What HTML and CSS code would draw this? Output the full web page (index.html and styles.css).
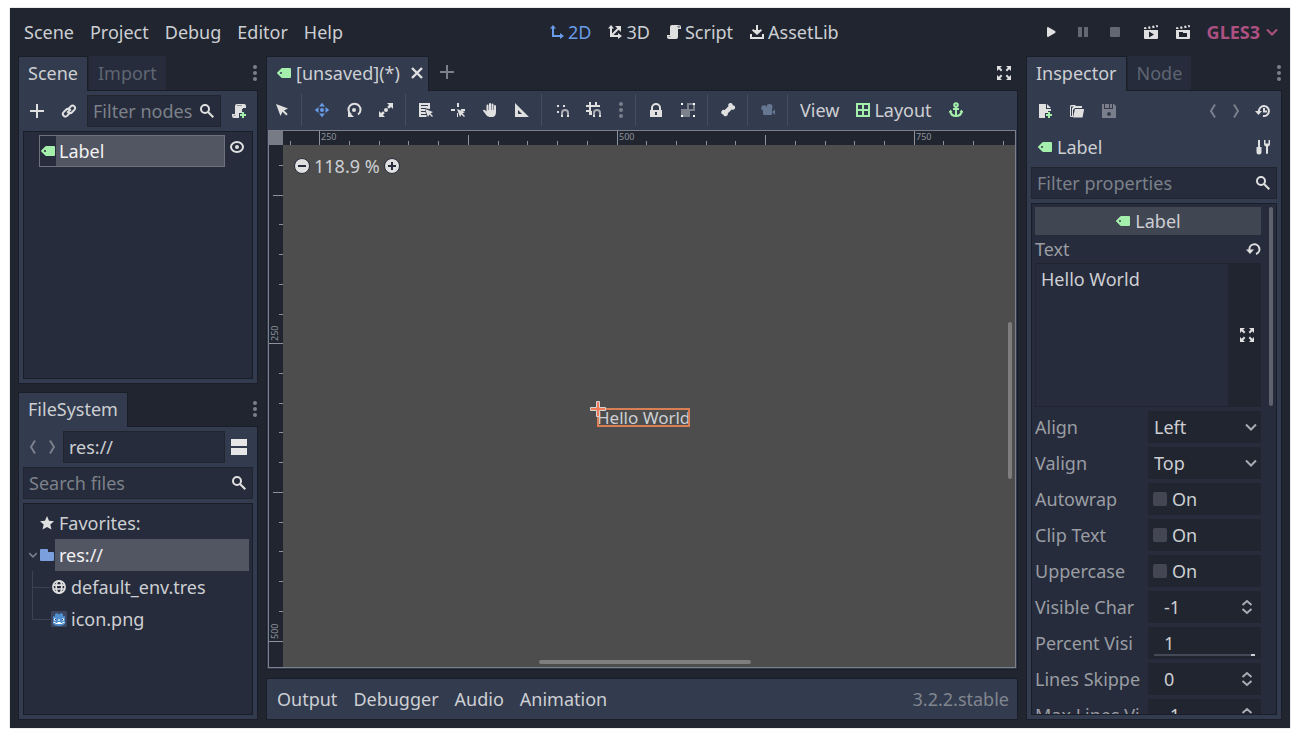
FILE: index.html
```
<!DOCTYPE html>
<html lang="en">
<head>
  <meta charset="UTF-8">
  <meta name="viewport" content="width=device-width, initial-scale=1.0">
  <title>Editor</title>
  <link rel="stylesheet" href="styles.css">
</head>
<body>

  <!-- Icon set -->
  <svg class="sprite" aria-hidden="true">
    <symbol id="i-label" viewBox="0 0 16 16"><path fill="#a5efac" fill-rule="evenodd" d="M6 3a1 1 0 0 0-.8.4l-4 4a1 1 0 0 0 0 1.2l4 4a1 1 0 0 0 .8.4h8a1 1 0 0 0 1-1V4a1 1 0 0 0-1-1zM5 7a1 1 0 1 1 0 2 1 1 0 0 1 0-2z"/></symbol>
    <symbol id="i-add" viewBox="0 0 16 16"><path d="M7 1v6H1v2h6v6h2V9h6V7H9V1z"/></symbol>
    <symbol id="i-link" viewBox="0 0 16 16"><g fill="none" stroke="currentColor" stroke-width="2"><path d="M8.500 10 6.300 12.600a2.500 2.500 0 0 1-3.700-3.500L5 6.700a2.500 2.500 0 0 1 3.500 0"/><path d="m7.500 6 2.300-2.600a2.500 2.500 0 0 1 3.600 3.500L11 9.300a2.500 2.500 0 0 1-3.500 0M6.200 9.800l3.600-3.600"/></g></symbol>
    <symbol id="i-search" viewBox="0 0 16 16"><g fill="none" stroke="currentColor" stroke-width="2"><circle cx="6" cy="6" r="4"/><path d="m9 9 5.300 5.300"/></g></symbol>
    <symbol id="i-script" viewBox="0 0 16 16"><path d="M6 1a2 2 0 0 0-2 2v8H1v2a2 2 0 0 0 2 2h7a2 2 0 0 0 2-2V5h3V3a2 2 0 0 0-2-2z"/><path fill="#8d9097" d="M11 2h1a1 1 0 0 1 2 1v1h-2.200V3H11zM2 12h2.500v1H3z"/></symbol>
    <symbol id="i-script-add" viewBox="0 0 16 16"><path d="M6 1a2 2 0 0 0-2 2v8H1v2a2 2 0 0 0 2 2h5v-5h3V6h1V5h3V3a2 2 0 0 0-2-2z"/><path fill="#8d9097" d="M6 2h5v1H6zM2 12h2.500v1H3z"/><path fill="#a5efac" d="M11 9v2H9v2h2v2h2v-2h2v-2h-2V9z"/></symbol>
    <symbol id="i-eye" viewBox="0 0 16 16"><ellipse cx="8" cy="8" rx="6" ry="5" fill="none" stroke="currentColor" stroke-width="2"/><circle cx="8" cy="8" r="2"/></symbol>
    <symbol id="i-dots" viewBox="0 0 16 16"><circle cx="8" cy="2" r="2"/><circle cx="8" cy="8" r="2"/><circle cx="8" cy="14" r="2"/></symbol>
    <symbol id="i-back" viewBox="0 0 16 16"><path fill="none" stroke="currentColor" stroke-width="2" d="M12 1.500 8 8l4 6.500"/></symbol>
    <symbol id="i-forward" viewBox="0 0 16 16"><path fill="none" stroke="currentColor" stroke-width="2" d="m7 1.500 4 6.500-4 6.500"/></symbol>
    <symbol id="i-split" viewBox="0 0 16 16"><path d="M0 0h16v7H0zM0 9h16v7H0z"/></symbol>
    <symbol id="i-star" viewBox="0 0 16 16"><path d="m8 1 2 4.700 5 .5-3.700 3.300 1.200 5L8 12l-4.500 2.500 1.200-5L1 6.200l5-.5z"/></symbol>
    <symbol id="i-folder" viewBox="0 0 16 16"><path fill="#7a9fdc" d="M2 2a1 1 0 0 0-1 1v10a1 1 0 0 0 1 1h12a1 1 0 0 0 1-1V6a1 1 0 0 0-1-1H9V3a1 1 0 0 0-1-1z"/></symbol>
    <symbol id="i-globe" viewBox="0 0 16 16"><g fill="none" stroke="currentColor" stroke-width="1.700"><circle cx="8" cy="8" r="6.100"/><ellipse cx="8" cy="8" rx="2.800" ry="6"/><path d="M2 6.200h12M2 10h12"/></g></symbol>
    <symbol id="i-godot" viewBox="0 0 16 16"><rect width="16" height="16" rx="1" fill="#3c4660"/><path fill="#4f8fd0" d="M2 5l2 .5V3l2-1 1 1h2l1-1 2 1v2.500l2-.5v8q-2 2-6 2t-6-2z"/><path fill="#fff" d="M3 7.500h2v2H3zM11 7.500h2v2h-2zM7.400 8h1.200v2H7.400zM2.500 11h2v1h2v-1h3v1h2v-1h2v1h-2v1h-7v-1h-2z"/><path fill="#2c3448" d="M4 8h1v1H4zM11 8h1v1h-1z"/></symbol>
    <symbol id="i-down" viewBox="0 0 16 16"><path fill="none" stroke="currentColor" stroke-width="2" d="m3 5.500 5 5 5-5"/></symbol>
    <symbol id="i-updown" viewBox="0 0 16 16"><path fill="none" stroke="currentColor" stroke-width="2" d="m3.500 6 4.500-4 4.500 4M3.500 10l4.500 4 4.500-4"/></symbol>
    <symbol id="i-2d" viewBox="0 0 16 16"><path d="M4 1 1 4.500h2V13h8v2l4-3-4-3v2H5V4.500h2z"/></symbol>
    <symbol id="i-3d" viewBox="0 0 16 16"><path d="M4 1 1 4.500h2V13h8v2l4-3-4-3v2H6.400l5.300-5.300L14 8V2H8l2.300 2.300L5 9.600V4.500h2z"/></symbol>
    <symbol id="i-asset" viewBox="0 0 16 16"><path d="M7 1h2v5h1.500L12 5l1 1.500-5 4.500-5-4.500L4 5l1.500 1H7zM1 10h2v3h10v-3h2v5H1z"/></symbol>
    <symbol id="i-play" viewBox="0 0 16 16"><path d="M4 4.200q0-1.700 1.500-1L12 7q1.400 1 0 2l-6.500 3.800q-1.500.7-1.500-1z"/></symbol>
    <symbol id="i-pause" viewBox="0 0 16 16"><path d="M3 3h4v10H3zM9 3h4v10H9z"/></symbol>
    <symbol id="i-stop" viewBox="0 0 16 16"><rect x="3" y="3" width="10" height="10" rx="1"/></symbol>
    <symbol id="i-clap-play" viewBox="0 0 16 16"><path fill-rule="evenodd" d="M1 6h14v8a1 1 0 0 1-1 1H2a1 1 0 0 1-1-1zM6 7.500v6l5-3z"/><path d="m1 3.500 2-.4.700 1.900H1zM5 2.700l2-.4.700 2.200-2 .4zM9 2l2-.4.700 2.200-2 .4zM12.800 1.300l1.800-.3.400 2-1.500.4z"/></symbol>
    <symbol id="i-clap-folder" viewBox="0 0 16 16"><path fill-rule="evenodd" d="M1 6h14v8a1 1 0 0 1-1 1H2a1 1 0 0 1-1-1zM4 8v5h8V9H8V8z"/><path d="m1 3.500 2-.4.700 1.900H1zM5 2.700l2-.4.700 2.200-2 .4zM9 2l2-.4.700 2.200-2 .4zM12.800 1.300l1.800-.3.400 2-1.500.4z"/></symbol>
    <symbol id="i-close" viewBox="0 0 16 16"><path fill="none" stroke="currentColor" stroke-width="2.400" d="m3 3 10 10M13 3 3 13"/></symbol>
    <symbol id="i-expand" viewBox="0 0 16 16"><path d="M1 1v5l1.800-1.800L5 6.400 6.400 5 4.200 2.800 6 1zM15 1v5l-1.800-1.800L11 6.400 9.600 5l2.200-2.200L10 1zM1 15v-5l1.800 1.800L5 9.600 6.400 11l-2.200 2.200L6 15zM15 15v-5l-1.800 1.800L11 9.600 9.600 11l2.200 2.200L10 15z"/></symbol>
    <symbol id="i-select" viewBox="0 0 16 16"><path d="m2 2 4.500 12 2-4.300 3.800 3.800 1.400-1.400L10 8.400 14 6.500z"/></symbol>
    <symbol id="i-move" viewBox="0 0 16 16"><path d="m8 .8 3 3.700H5zM8 15.200l3-3.700H5zM.8 8l3.700-3v6zM15.200 8l-3.700-3v6z"/><circle cx="8" cy="8" r="2"/></symbol>
    <symbol id="i-rotate" viewBox="0 0 16 16"><path fill="none" stroke="currentColor" stroke-width="2" d="M5 12.500A6 6 0 1 1 12 12.500"/><path d="M2 9v6h6z"/><circle cx="8" cy="8" r="2"/></symbol>
    <symbol id="i-scale" viewBox="0 0 16 16"><path d="M9 1h6v6l-2-2-2 1.800L9.200 5 11 3zM1 9v6h6l-2-2 1.800-2L5 9.200 3 11z"/><circle cx="8" cy="8" r="2"/></symbol>
    <symbol id="i-listsel" viewBox="0 0 16 16"><path fill-rule="evenodd" d="M1 1h11v6L8 6.500V6H3v1h4v2H3v1h4.500l.5 2H3v1h5.500v2H1zM3 3v1h7V3z"/><path d="m7 7 3 8 1.500-2.500L14 15l1-1-2.500-2.500L15 10z"/></symbol>
    <symbol id="i-pivot" viewBox="0 0 16 16"><path d="M7 1h2v4H7zM1 7h4v2H1zM11 7h4v2h-4zM7 11h1v4H7zM7 7l3 8 1.500-2.500L14 15l1-1-2.500-2.500L15 10z"/></symbol>
    <symbol id="i-hand" viewBox="0 0 16 16"><path d="M4.500 3.500a1 1 0 0 1 2 0V8H7V2a1 1 0 0 1 2 0v6h.5V2.500a1 1 0 0 1 2 0V8h.5V4a1 1 0 0 1 2 0v6q0 5-4 5H7.500q-2.500 0-4-3L.8 8.500Q2 7 3.500 8.500l1 1z"/></symbol>
    <symbol id="i-ruler" viewBox="0 0 16 16"><path fill-rule="evenodd" d="M1 1v14h14zm3 7 4 4H4z"/></symbol>
    <symbol id="i-snap" viewBox="0 0 16 16"><path d="M3 3h2v2H3zM9 3h2v2H9zM3 9h2v2H3z"/><path fill="none" stroke="#a9acb2" stroke-width="2" d="M8 13v-2a3 3 0 0 1 6 0v2"/><path d="M7 13h2v2H7zM13 13h2v2h-2z"/></symbol>
    <symbol id="i-grid" viewBox="0 0 16 16"><path d="M3 0h2v3h4V0h2v3h3v2H5v4h1v4H3v-3H0V8h3V5H0V3h3z"/><path fill="none" stroke="#a9acb2" stroke-width="2" d="M8 13v-2a3 3 0 0 1 6 0v2"/><path d="M7 13h2v2H7zM13 13h2v2h-2z"/></symbol>
    <symbol id="i-lock" viewBox="0 0 16 16"><path fill-rule="evenodd" d="M2 8h1V6a5 5 0 0 1 10 0v2h1v7H2zm3 0h6V6a3 3 0 0 0-6 0zm2 2v3h2v-3z"/></symbol>
    <symbol id="i-group" viewBox="0 0 16 16"><path fill="#7d828d" fill-rule="evenodd" d="M7 1h8v8h-5v6H1V7h6zm2 2v4h4V3z"/><path fill="#fff" d="M1 1h2v2H1zM13 1h2v2h-2zM1 13h2v2H1zM13 13h2v2h-2z"/></symbol>
    <symbol id="i-bone" viewBox="0 0 16 16"><path d="M10.500 1a2.200 2.200 0 0 0-2 3.300L4.700 8.100a2.300 2.300 0 1 0-1.400 4.300A2.300 2.300 0 1 0 7.900 11.300l3.800-3.800a2.300 2.300 0 1 0 1.100-4.300A2.300 2.300 0 0 0 10.500 1z"/></symbol>
    <symbol id="i-camera" viewBox="0 0 16 16"><g fill="#667791"><circle cx="4" cy="6" r="2.700"/><circle cx="9.500" cy="5" r="3"/><rect x="3" y="6" width="9" height="7" rx="1"/><path d="m12 10 3-2.500v5.500z"/></g></symbol>
    <symbol id="i-layout" viewBox="0 0 16 16"><path fill="#a5efac" fill-rule="evenodd" d="M1 1h14v14H1zm2 2v4h4V3zm6 0v4h4V3zM3 9v4h4V9zm6 0v4h4V9z"/></symbol>
    <symbol id="i-anchor" viewBox="0 0 16 16"><g fill="none" stroke="#a5efac" stroke-width="2"><circle cx="8" cy="3" r="1.800"/><path d="M8 5v9M5 7h6M2.200 9Q3 14 8 14t5.800-5"/></g><path fill="#a5efac" d="m.5 10.500 2-3 2 2.500zM15.500 10.500l-2-3-2 2.500z"/></symbol>
    <symbol id="i-minus-c" viewBox="0 0 16 16"><circle cx="8" cy="8" r="7.500" fill="#e0e0e0" stroke="#262c3b"/><path fill="#262c3b" d="M4 7h8v2H4z"/></symbol>
    <symbol id="i-plus-c" viewBox="0 0 16 16"><circle cx="8" cy="8" r="7.500" fill="#e0e0e0" stroke="#262c3b"/><path fill="#262c3b" d="M4 7h3V4h2v3h3v2H9v3H7V9H4z"/></symbol>
    <symbol id="i-new" viewBox="0 0 16 16"><path d="M2 1h7v5h5v2h-3v2H8v5H2zM10 1l4 4h-4z"/><path fill="#a5efac" d="M11 9v2H9v2h2v2h2v-2h2v-2h-2V9z"/></symbol>
    <symbol id="i-open" viewBox="0 0 16 16"><path d="M2 2h4l1 1h6v2H6L4 7v7H2a1 1 0 0 1-1-1V3zm0 1.500V13h1V5l2-1.500z"/><path d="M6 6h9v1l-1.500 7.500H4z"/></symbol>
    <symbol id="i-save" viewBox="0 0 16 16"><path fill-rule="evenodd" d="M1 1h2v5h9V1h1l2 2v12H1zm7 8a2 2 0 1 0 0 4 2 2 0 0 0 0-4zM6 1h2v4H4V1zM9 1h2v4H9z"/></symbol>
    <symbol id="i-history" viewBox="0 0 16 16"><path fill="none" stroke="currentColor" stroke-width="2" d="M4 9a5 5 0 1 1 4 4M9 5v3.500h3"/><path d="M0 8h7l-3.500 4z"/></symbol>
    <symbol id="i-tools" viewBox="0 0 16 16"><path d="M3 1h2v7h1.500v5a2.500 2.500 0 0 1-5 0V8H3zM9 1v4q0 2 2 2.500V14a1 1 0 0 0 2 0V7.500q2-.5 2-2.500V1h-1.500v3.500h-3V1z"/></symbol>
    <symbol id="i-reload" viewBox="0 0 16 16"><path fill="none" stroke="currentColor" stroke-width="2" d="M4.500 9a5 5 0 1 1 6.500 4"/><path d="M1 8.500h8L5 13z"/></symbol>
  </svg>

  <div class="window">

    <!-- Menu bar -->
    <header class="menubar">
      <nav class="menus">
        <button>Scene</button>
        <button>Project</button>
        <button>Debug</button>
        <button>Editor</button>
        <button>Help</button>
      </nav>
      <nav class="modes">
        <button class="active"><svg class="icon"><use href="#i-2d"/></svg>2D</button>
        <button><svg class="icon"><use href="#i-3d"/></svg>3D</button>
        <button><svg class="icon"><use href="#i-script"/></svg>Script</button>
        <button><svg class="icon"><use href="#i-asset"/></svg>AssetLib</button>
      </nav>
      <div class="run">
        <div class="playback">
          <button class="tool" aria-label="Play"><svg class="icon"><use href="#i-play"/></svg></button>
          <button class="tool dim" aria-label="Pause"><svg class="icon"><use href="#i-pause"/></svg></button>
          <button class="tool dim" aria-label="Stop"><svg class="icon"><use href="#i-stop"/></svg></button>
        </div>
        <button class="tool" aria-label="Play scene"><svg class="icon"><use href="#i-clap-play"/></svg></button>
        <button class="tool" aria-label="Play custom scene"><svg class="icon"><use href="#i-clap-folder"/></svg></button>
        <button class="driver">GLES3<svg class="icon"><use href="#i-down"/></svg></button>
      </div>
    </header>

    <main class="workspace">

      <!-- Left docks -->
      <div class="column left">
        <section class="dock">
          <div class="tabs">
            <button class="tab current">Scene</button>
            <button class="tab">Import</button>
            <button class="more" aria-label="Dock options"><svg class="icon"><use href="#i-dots"/></svg></button>
          </div>
          <div class="panel">
            <div class="row">
              <button class="tool" aria-label="Add node"><svg class="icon"><use href="#i-add"/></svg></button>
              <button class="tool" aria-label="Instance scene"><svg class="icon"><use href="#i-link"/></svg></button>
              <div class="field grow">
                <input type="text" placeholder="Filter nodes" aria-label="Filter nodes">
                <svg class="icon"><use href="#i-search"/></svg>
              </div>
              <button class="tool" aria-label="Attach script"><svg class="icon"><use href="#i-script-add"/></svg></button>
            </div>
            <ul class="tree scene-tree">
              <li>
                <span class="node"><svg class="icon"><use href="#i-label"/></svg><span class="name">Label</span></span>
                <button class="visibility" aria-label="Toggle visibility"><svg class="icon"><use href="#i-eye"/></svg></button>
              </li>
            </ul>
          </div>
        </section>

        <section class="dock">
          <div class="tabs">
            <button class="tab current">FileSystem</button>
            <button class="more" aria-label="Dock options"><svg class="icon"><use href="#i-dots"/></svg></button>
          </div>
          <div class="panel">
            <div class="row">
              <button class="arrow" aria-label="Back"><svg class="icon"><use href="#i-back"/></svg></button>
              <button class="arrow" aria-label="Forward"><svg class="icon"><use href="#i-forward"/></svg></button>
              <div class="field grow"><input type="text" value="res://" aria-label="Path"></div>
              <button class="split" aria-label="Split mode"><svg class="icon"><use href="#i-split"/></svg></button>
            </div>
            <div class="field">
              <input type="text" placeholder="Search files" aria-label="Search files">
              <svg class="icon"><use href="#i-search"/></svg>
            </div>
            <ul class="tree files">
              <li><svg class="icon"><use href="#i-star"/></svg><span class="name">Favorites:</span></li>
              <li class="selected"><svg class="icon fold"><use href="#i-down"/></svg><svg class="icon"><use href="#i-folder"/></svg><span class="name">res://</span></li>
              <li class="child"><svg class="icon"><use href="#i-globe"/></svg><span class="name">default_env.tres</span></li>
              <li class="child end"><svg class="icon"><use href="#i-godot"/></svg><span class="name">icon.png</span></li>
            </ul>
          </div>
        </section>
      </div>

      <!-- 2D editor -->
      <div class="column center">
        <section class="dock">
          <div class="tabs">
            <button class="tab current scene-tab"><svg class="icon"><use href="#i-label"/></svg>[unsaved](*)<svg class="icon x"><use href="#i-close"/></svg></button>
            <button class="tool add" aria-label="New scene"><svg class="icon"><use href="#i-add"/></svg></button>
            <button class="tool more" aria-label="Distraction free mode"><svg class="icon"><use href="#i-expand"/></svg></button>
          </div>
          <div class="panel canvas-panel">
            <div class="toolbar">
              <button class="tool" aria-label="Select"><svg class="icon"><use href="#i-select"/></svg></button>
              <span class="sep"></span>
              <button class="tool active" aria-label="Move"><svg class="icon"><use href="#i-move"/></svg></button>
              <button class="tool" aria-label="Rotate"><svg class="icon"><use href="#i-rotate"/></svg></button>
              <button class="tool" aria-label="Scale"><svg class="icon"><use href="#i-scale"/></svg></button>
              <span class="sep"></span>
              <button class="tool" aria-label="List select"><svg class="icon"><use href="#i-listsel"/></svg></button>
              <button class="tool" aria-label="Pivot"><svg class="icon"><use href="#i-pivot"/></svg></button>
              <button class="tool" aria-label="Pan"><svg class="icon"><use href="#i-hand"/></svg></button>
              <button class="tool" aria-label="Ruler"><svg class="icon"><use href="#i-ruler"/></svg></button>
              <span class="sep"></span>
              <button class="tool" aria-label="Smart snap"><svg class="icon"><use href="#i-snap"/></svg></button>
              <button class="tool" aria-label="Grid snap"><svg class="icon"><use href="#i-grid"/></svg></button>
              <button class="tool narrow dim" aria-label="Snap options"><svg class="icon"><use href="#i-dots"/></svg></button>
              <span class="sep"></span>
              <button class="tool" aria-label="Lock"><svg class="icon"><use href="#i-lock"/></svg></button>
              <button class="tool" aria-label="Group"><svg class="icon"><use href="#i-group"/></svg></button>
              <span class="sep"></span>
              <button class="tool" aria-label="Skeleton"><svg class="icon"><use href="#i-bone"/></svg></button>
              <span class="sep"></span>
              <button class="tool" aria-label="Camera override"><svg class="icon"><use href="#i-camera"/></svg></button>
              <span class="sep"></span>
              <button class="text-tool">View</button>
              <button class="text-tool"><svg class="icon"><use href="#i-layout"/></svg>Layout</button>
              <button class="tool" aria-label="Anchors"><svg class="icon"><use href="#i-anchor"/></svg></button>
            </div>
            <div class="viewport">
              <div class="corner"></div>
              <svg class="ruler" id="ruler-x"></svg>
              <svg class="ruler" id="ruler-y"></svg>
              <div class="canvas">
                <div class="zoom">
                  <button aria-label="Zoom out"><svg class="icon"><use href="#i-minus-c"/></svg></button>
                  <span>118.9 %</span>
                  <button aria-label="Zoom in"><svg class="icon"><use href="#i-plus-c"/></svg></button>
                </div>
                <div class="item">Hello World
                  <svg class="pivot" viewBox="0 0 16 16"><path d="M6.500.5h3v6h6v3h-6v6h-3v-6h-6v-3h6z"/></svg>
                </div>
                <span class="scroll-y"></span>
                <span class="scroll-x"></span>
              </div>
            </div>
          </div>
        </section>
        <footer class="bottom">
          <button>Output</button>
          <button>Debugger</button>
          <button>Audio</button>
          <button>Animation</button>
          <span class="version">3.2.2.stable</span>
        </footer>
      </div>

      <!-- Inspector -->
      <div class="column right">
        <section class="dock">
          <div class="tabs">
            <button class="tab current">Inspector</button>
            <button class="tab">Node</button>
            <button class="more" aria-label="Dock options"><svg class="icon"><use href="#i-dots"/></svg></button>
          </div>
          <div class="panel">
            <div class="row">
              <button class="tool" aria-label="New resource"><svg class="icon"><use href="#i-new"/></svg></button>
              <button class="tool" aria-label="Open resource"><svg class="icon"><use href="#i-open"/></svg></button>
              <button class="tool dim" aria-label="Save resource"><svg class="icon"><use href="#i-save"/></svg></button>
              <span class="grow"></span>
              <button class="arrow wide" aria-label="Previous"><svg class="icon"><use href="#i-back"/></svg></button>
              <button class="arrow wide" aria-label="Next"><svg class="icon"><use href="#i-forward"/></svg></button>
              <button class="tool" aria-label="History"><svg class="icon"><use href="#i-history"/></svg></button>
            </div>
            <div class="row object">
              <svg class="icon"><use href="#i-label"/></svg>
              <span class="grow">Label</span>
              <button class="tool" aria-label="Object tools"><svg class="icon"><use href="#i-tools"/></svg></button>
            </div>
            <div class="field">
              <input type="text" placeholder="Filter properties" aria-label="Filter properties">
              <svg class="icon"><use href="#i-search"/></svg>
            </div>
            <div class="tree properties">
              <div class="list">
                <h2 class="category"><svg class="icon"><use href="#i-label"/></svg>Label</h2>
                <div class="text-head">
                  <label for="text">Text</label>
                  <button aria-label="Revert"><svg class="icon"><use href="#i-reload"/></svg></button>
                </div>
                <div class="text-edit">
                  <textarea id="text">Hello World</textarea>
                  <button aria-label="Expand"><svg class="icon"><use href="#i-expand"/></svg></button>
                </div>
                <div class="prop">
                  <label for="align">Align</label>
                  <div class="value"><select id="align"><option>Left</option><option>Center</option><option>Right</option></select><svg class="icon"><use href="#i-down"/></svg></div>
                </div>
                <div class="prop">
                  <label for="valign">Valign</label>
                  <div class="value"><select id="valign"><option>Top</option><option>Center</option><option>Bottom</option></select><svg class="icon"><use href="#i-down"/></svg></div>
                </div>
                <div class="prop">
                  <label for="autowrap">Autowrap</label>
                  <label class="value check"><input type="checkbox" id="autowrap">On</label>
                </div>
                <div class="prop">
                  <label for="clip">Clip Text</label>
                  <label class="value check"><input type="checkbox" id="clip">On</label>
                </div>
                <div class="prop">
                  <label for="upper">Uppercase</label>
                  <label class="value check"><input type="checkbox" id="upper">On</label>
                </div>
                <div class="prop">
                  <label for="visible">Visible Char</label>
                  <div class="value"><input type="text" id="visible" value="-1"><svg class="icon"><use href="#i-updown"/></svg></div>
                </div>
                <div class="prop">
                  <label for="percent">Percent Visi</label>
                  <div class="value"><input type="text" id="percent" value="1"><span class="slide"></span></div>
                </div>
                <div class="prop">
                  <label for="skipped">Lines Skippe</label>
                  <div class="value"><input type="text" id="skipped" value="0"><svg class="icon"><use href="#i-updown"/></svg></div>
                </div>
                <div class="prop">
                  <label for="maxlines">Max Lines Vi</label>
                  <div class="value"><input type="text" id="maxlines" value="-1"><svg class="icon"><use href="#i-updown"/></svg></div>
                </div>
              </div>
              <span class="scroll"></span>
            </div>
          </div>
        </section>
      </div>

    </main>
  </div>

  <script>
    const zoom = 1.189;
    const step = 25;
    const size = 14;

    // canvas origin, measured from the start of each ruler
    drawRuler("ruler-x", -261, false);
    drawRuler("ruler-y", -99, true);

    function drawRuler(id, origin, vertical) {
      const svg = document.getElementById(id);
      const length = vertical ? svg.clientHeight : svg.clientWidth;
      let out = "";
      for (let unit = 0; origin + unit * zoom < length; unit += step) {
        const pos = Math.round(origin + unit * zoom);
        if (pos < 0) continue;
        const major = unit % 250 === 0;
        const tick = major ? size : unit % 125 === 0 ? 10 : 4;
        if (vertical) {
          out += `<rect x="${size - tick}" y="${pos}" width="${tick}" height="1"/>`;
          if (major) out += `<text transform="translate(9 ${pos - 2}) rotate(-90)">${unit}</text>`;
        } else {
          out += `<rect x="${pos}" y="${size - tick}" width="1" height="${tick}"/>`;
          if (major) out += `<text x="${pos + 2}" y="9">${unit}</text>`;
        }
      }
      svg.innerHTML = out;
    }
  </script>
</body>
</html>
```
FILE: styles.css
```
* {
  box-sizing: border-box;
}

body {
  margin: 0;
  padding: 8px 10px 10px;
  height: 100vh;
  background: #fff;
  color: #cdcfd3;
  font: 18px/24px "Noto Sans", sans-serif;
  overflow: hidden;
}

button,
input,
select,
textarea {
  margin: 0;
  padding: 0;
  border: 0;
  background: none;
  color: inherit;
  font: inherit;
  outline: none;
}

button {
  display: flex;
  align-items: center;
  justify-content: center;
  flex: none;
  white-space: nowrap;
}

ul {
  margin: 0;
  list-style: none;
}

.sprite {
  position: absolute;
  width: 0;
  height: 0;
}

.icon {
  display: block;
  flex: none;
  width: 16px;
  height: 16px;
  color: #e0e0e0;
  fill: currentColor;
}

.grow {
  flex: 1;
}

.window {
  display: flex;
  flex-direction: column;
  height: 100%;
  padding: 0 8px 8px;
  background: #202530;
  box-shadow: 0 0 1px #888;
}

/* Menu bar */
.menubar {
  display: flex;
  justify-content: space-between;
  height: 48px;
}

.menus,
.modes,
.run,
.playback {
  display: flex;
  align-items: center;
}

.menus button {
  padding: 0 8px;
}

.menus {
  margin-left: -2px;
}

.modes button {
  gap: 3px;
  padding: 0 8px;
}

.active,
.active .icon {
  color: #699ce8;
}

.run,
.playback {
  gap: 4px;
}

.playback {
  margin-right: 4px;
}

.driver {
  gap: 4px;
  padding-left: 6px;
  padding-right: 2px;
  font-weight: bold;
}

.driver,
.driver .icon {
  color: #ad5182;
}

.tool {
  width: 28px;
  height: 28px;
}

.dim .icon {
  color: #7a7f8b;
}

.run .dim .icon {
  color: #636771;
}

/* Docks */
.workspace {
  display: flex;
  flex: 1;
  gap: 8px;
  min-height: 0;
}

.column {
  display: flex;
  flex-direction: column;
  gap: 8px;
  min-width: 0;
}

.left {
  width: 240px;
}

.center {
  flex: 1;
}

.right {
  width: 256px;
}

.dock {
  display: flex;
  flex: 1;
  flex-direction: column;
  min-height: 0;
}

.tabs {
  display: flex;
  flex: none;
  gap: 1px;
  height: 34px;
}

.tab {
  padding: 0 9px;
  background: #262c3b;
  color: #5f6573;
}

.tab.current {
  position: relative;
  z-index: 1;
  margin-bottom: -1px;
  padding-bottom: 2px;
  border: 1px solid #1a1e28;
  border-bottom: 0;
  background: #333b4e;
  color: #cdcfd3;
}

.more {
  width: 6px;
  margin-left: auto;
}

.more .icon {
  color: #7a7f8b;
}

.panel {
  display: flex;
  flex: 1;
  flex-direction: column;
  gap: 4px;
  min-height: 0;
  padding: 4px;
  border: 1px solid #1a1e28;
  background: #333b4e;
}

.row {
  display: flex;
  flex: none;
  align-items: center;
  gap: 4px;
  height: 32px;
}

.field {
  display: flex;
  flex: none;
  align-items: center;
  height: 32px;
  padding: 0 5px;
  border: 1px solid #202530;
  background: #262c3b;
}

.field.grow {
  flex: 1;
  min-width: 0;
}

.field input {
  flex: 1;
  width: 0;
}

.field ::placeholder {
  color: #7c818a;
  opacity: 1;
}

.arrow {
  width: 16px;
  height: 28px;
}

.arrow.wide {
  width: 20px;
}

.arrow .icon {
  color: #7a7f8b;
}

.split {
  width: 24px;
  height: 28px;
  padding-right: 4px;
}

.split .icon {
  color: #e6e6e6;
}

.tree {
  flex: 1;
  min-height: 0;
  padding: 3px;
  border: 1px solid #1a1e28;
  background: #262c3b;
}

.tree li {
  display: flex;
  align-items: center;
  height: 32px;
}

.scene-tree li {
  padding-left: 12px;
}

.node {
  display: flex;
  flex: 1;
  align-items: center;
  height: 32px;
  border: 1px solid #6d717c;
}

.name {
  padding: 0 4px;
}

.node .name,
.selected .name {
  flex: 1;
  height: 100%;
  background: #525662;
  color: #f2f2f3;
  line-height: 32px;
}

.node .name {
  padding-left: 3px;
  line-height: 30px;
}

.visibility {
  width: 24px;
  height: 24px;
  align-self: flex-start;
}

.files li {
  padding-left: 12px;
}

.files .selected {
  padding-left: 0;
}

.fold {
  width: 12px;
  color: #7a7f8b;
}

.files .child {
  padding-left: 24px;
  background: linear-gradient(#3c4250, #3c4250) 5px 0 / 1px 100% no-repeat,
    linear-gradient(#3c4250, #3c4250) 5px 50% / 19px 1px no-repeat;
}

.files .end {
  background-size: 1px 50%, 19px 1px;
}

/* 2D editor */
.scene-tab {
  gap: 4px;
  padding: 0 3px 0 9px;
}

.scene-tab .x {
  margin-left: 5px;
}

.tabs .add {
  width: 34px;
  height: 32px;
}

.add .icon {
  color: #7a7f8b;
}

.tool.more {
  width: 28px;
  height: 34px;
}

.tool.more .icon {
  color: #e0e0e0;
}

.canvas-panel {
  gap: 0;
  padding: 0 1px 1px;
}

.toolbar {
  display: flex;
  flex: none;
  align-items: center;
  gap: 4px;
  height: 39px;
  padding-bottom: 1px;
}

.sep {
  width: 4px;
  height: 32px;
  background: linear-gradient(#454c5d, #454c5d) 1px 0 / 1px 100% no-repeat;
}

.narrow {
  width: 18px;
}

.text-tool {
  gap: 3px;
  padding: 0 6px;
}

.viewport {
  display: grid;
  flex: 1;
  grid-template-columns: 14px 1fr;
  grid-template-rows: 14px 1fr;
  min-height: 0;
  border: 1px solid #7c808b;
}

.corner {
  background: #777b85;
}

.ruler {
  width: 100%;
  height: 100%;
  background: #202530;
  fill: #8e929b;
  font-size: 9px;
}

.canvas {
  position: relative;
  background: #4d4d4d;
}

.zoom {
  display: flex;
  align-items: center;
  gap: 4px;
  padding: 9px 11px;
}

.item {
  position: absolute;
  top: 263px;
  left: 314px;
  outline: 2px solid #d97f55;
  outline-offset: -2px;
  font-size: 17px;
  line-height: 19px;
}

.pivot {
  position: absolute;
  top: -7px;
  left: -7px;
  width: 16px;
  height: 16px;
  fill: #f07c55;
  stroke: #d5d5d8;
}

.scroll-x,
.scroll-y,
.scroll {
  border-radius: 2px;
  background: #7e7e7e;
}

.scroll-y {
  position: absolute;
  top: 34%;
  right: 3px;
  width: 4px;
  height: 30%;
}

.scroll-x {
  position: absolute;
  bottom: 3px;
  left: 35%;
  width: 29%;
  height: 4px;
}

.bottom {
  display: flex;
  flex: none;
  align-items: center;
  gap: 16px;
  height: 42px;
  padding: 0 8px 0 10px;
  border: 1px solid #1a1e28;
  background: #333b4e;
}

.version {
  margin-left: auto;
  color: #81868f;
}

/* Inspector */
.object {
  padding-left: 6px;
}

.properties {
  display: flex;
  gap: 8px;
  overflow: hidden;
}

.list {
  flex: 1;
  min-width: 0;
  color: #9a9da4;
}

.category {
  display: flex;
  align-items: center;
  justify-content: center;
  gap: 4px;
  height: 28px;
  margin: 0;
  background: #414653;
  color: #cdcfd3;
  font-size: 18px;
  font-weight: normal;
}

.text-head {
  display: flex;
  align-items: center;
  justify-content: space-between;
  height: 28px;
}

.text-edit {
  display: flex;
  height: 144px;
  margin-bottom: 4px;
  background: #202530;
}

.text-edit textarea {
  flex: 1;
  min-width: 0;
  padding: 3px 5px;
  border: 1px solid #202530;
  background: #262c3b;
  color: #cdcfd3;
  resize: none;
}

.text-edit button {
  width: 28px;
  margin: 0 0 0 4px;
}

.prop {
  display: grid;
  grid-template-columns: 1fr 1fr;
  align-items: center;
  height: 32px;
  margin-bottom: 4px;
  white-space: nowrap;
}

.value {
  display: flex;
  position: relative;
  align-items: center;
  min-width: 0;
  height: 32px;
  padding: 0 6px 0 5px;
  background: #202530;
  color: #cdcfd3;
}

.value select {
  flex: 1;
  width: 0;
  padding-left: 1px;
  appearance: none;
}

.value .icon {
  color: #a9acb2;
}

.value select + .icon {
  margin-right: -4px;
}

.value input[type="text"] {
  flex: 1;
  width: 0;
  padding-left: 11px;
}

.check {
  gap: 5px;
}

.check input {
  width: 14px;
  height: 14px;
  border-radius: 2px;
  background: #444753;
  appearance: none;
}

.slide {
  position: absolute;
  right: 6px;
  bottom: 3px;
  left: 6px;
  height: 2px;
  background: linear-gradient(#cdcfd3, #cdcfd3) right / 4px 100% no-repeat #444957;
}

.scroll {
  width: 4px;
  height: 199px;
  background: #5d626e;
}
```
